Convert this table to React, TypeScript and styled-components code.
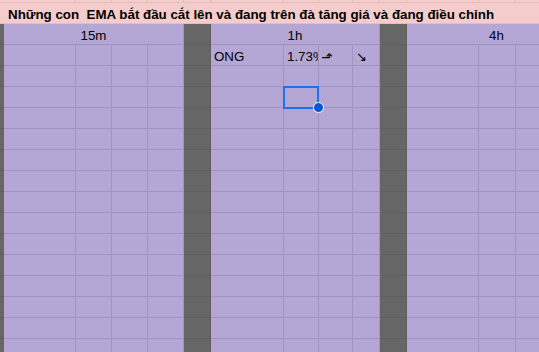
import React from 'react';
import styled, { createGlobalStyle } from 'styled-components';

const GlobalStyle = createGlobalStyle`
  html, body {
    margin: 0;
    padding: 0;
    background: #ffffff;
  }
  body {
    font-family: "Liberation Sans", Arial, "DejaVu Sans", sans-serif;
  }
`;

// column widths, border included (px)
const COLS = [4, 72, 36, 36, 36, 27, 73, 35, 34, 27, 27, 72, 37, 36, 35];
const DARK = [0, 5, 10];
const DATA_ROWS = 16;

type Fill = 'pink' | 'purple' | 'dark';

const FILLS: Record<Fill, string> = {
  pink: '#f4cccc',
  purple: '#b4a7d6',
  dark: '#666666',
};

const LINES: Record<Fill, string> = {
  pink: '#e6bcbc',
  purple: '#9f93c2',
  dark: '#5f5f5f',
};

const Sheet = styled.div`
  position: relative;
  width: 539px;
  height: 352px;
  overflow: hidden;
  display: grid;
  grid-template-columns: ${COLS.map((w) => `${w}px`).join(' ')};
  grid-template-rows: 3px 21px 21px;
  grid-auto-rows: 21px;
  font-size: 13.33px;
  color: #000000;
`;

const Cell = styled.div<{ $fill: Fill; $span?: number; $align?: 'left' | 'center'; $bold?: boolean; $pad?: number }>`
  position: relative;
  box-sizing: border-box;
  grid-column: span ${(p) => p.$span || 1};
  background: ${(p) => FILLS[p.$fill]};
  border-right: 1px solid ${(p) => LINES[p.$fill]};
  border-bottom: 1px solid ${(p) => LINES[p.$fill]};
  display: flex;
  align-items: flex-end;
  justify-content: ${(p) => (p.$align === 'center' ? 'center' : 'flex-start')};
  padding: 0 ${(p) => (p.$pad ?? 3)}px 1px;
  overflow: hidden;
  white-space: pre;
  font-weight: ${(p) => (p.$bold ? 700 : 400)};
  min-width: 0;
`;

const Glyph = styled.span<{ $size: number; $shift?: number }>`
  font-family: "DejaVu Sans", sans-serif;
  font-size: ${(p) => p.$size}px;
  line-height: 1;
  transform: translateY(${(p) => p.$shift || 0}px);
`;

const SelectedCell = styled(Cell)`
  overflow: visible;
  z-index: 2;
`;

const Selection = styled.div`
  position: absolute;
  left: -1px;
  top: -1px;
  width: 36px;
  height: 23px;
  box-sizing: border-box;
  border: 2px solid #1a73e8;
  pointer-events: none;
`;

const Handle = styled.div`
  position: absolute;
  right: -6px;
  bottom: -6px;
  width: 9px;
  height: 9px;
  border-radius: 50%;
  background: #0b57d0;
  border: 1px solid #ffffff;
`;

const title = 'Những con  EMA bắt đầu cắt lên và đang trên đà tăng giá và đang điều chỉnh';

const fillOf = (col: number): Fill => (DARK.includes(col) ? 'dark' : 'purple');

const App = () => {
  const rows: React.ReactNode[] = [];

  for (let r = 0; r < DATA_ROWS; r++) {
    COLS.forEach((_, c) => {
      const key = `r${r}c${c}`;
      if (r === 0 && c === 6) {
        rows.push(<Cell key={key} $fill="purple">ONG</Cell>);
      } else if (r === 0 && c === 7) {
        rows.push(<Cell key={key} $fill="purple">1.73%</Cell>);
      } else if (r === 0 && c === 8) {
        rows.push(
          <Cell key={key} $fill="purple" $pad={2}>
            <Glyph $size={14} $shift={0}>⬏</Glyph>
          </Cell>
        );
      } else if (r === 0 && c === 9) {
        rows.push(
          <Cell key={key} $fill="purple" $pad={3}>
            <Glyph $size={13} $shift={-1}>↘</Glyph>
          </Cell>
        );
      } else if (r === 2 && c === 7) {
        rows.push(
          <SelectedCell key={key} $fill="purple">
            <Selection />
            <Handle />
          </SelectedCell>
        );
      } else {
        rows.push(<Cell key={key} $fill={fillOf(c)} />);
      }
    });
  }

  return (
    <>
      <GlobalStyle />
      <Sheet>
        {COLS.map((_, c) => (
          <Cell key={`top${c}`} $fill="pink" />
        ))}
        <Cell $fill="pink" $span={COLS.length} $bold $pad={8}>
          {title}
        </Cell>

        <Cell $fill="dark" />
        <Cell $fill="purple" $span={4} $align="center">15m</Cell>
        <Cell $fill="dark" />
        <Cell $fill="purple" $span={4} $align="center">1h</Cell>
        <Cell $fill="dark" />
        <Cell $fill="purple" $span={4} $align="center">4h</Cell>

        {rows}
      </Sheet>
    </>
  );
};

export default App;
